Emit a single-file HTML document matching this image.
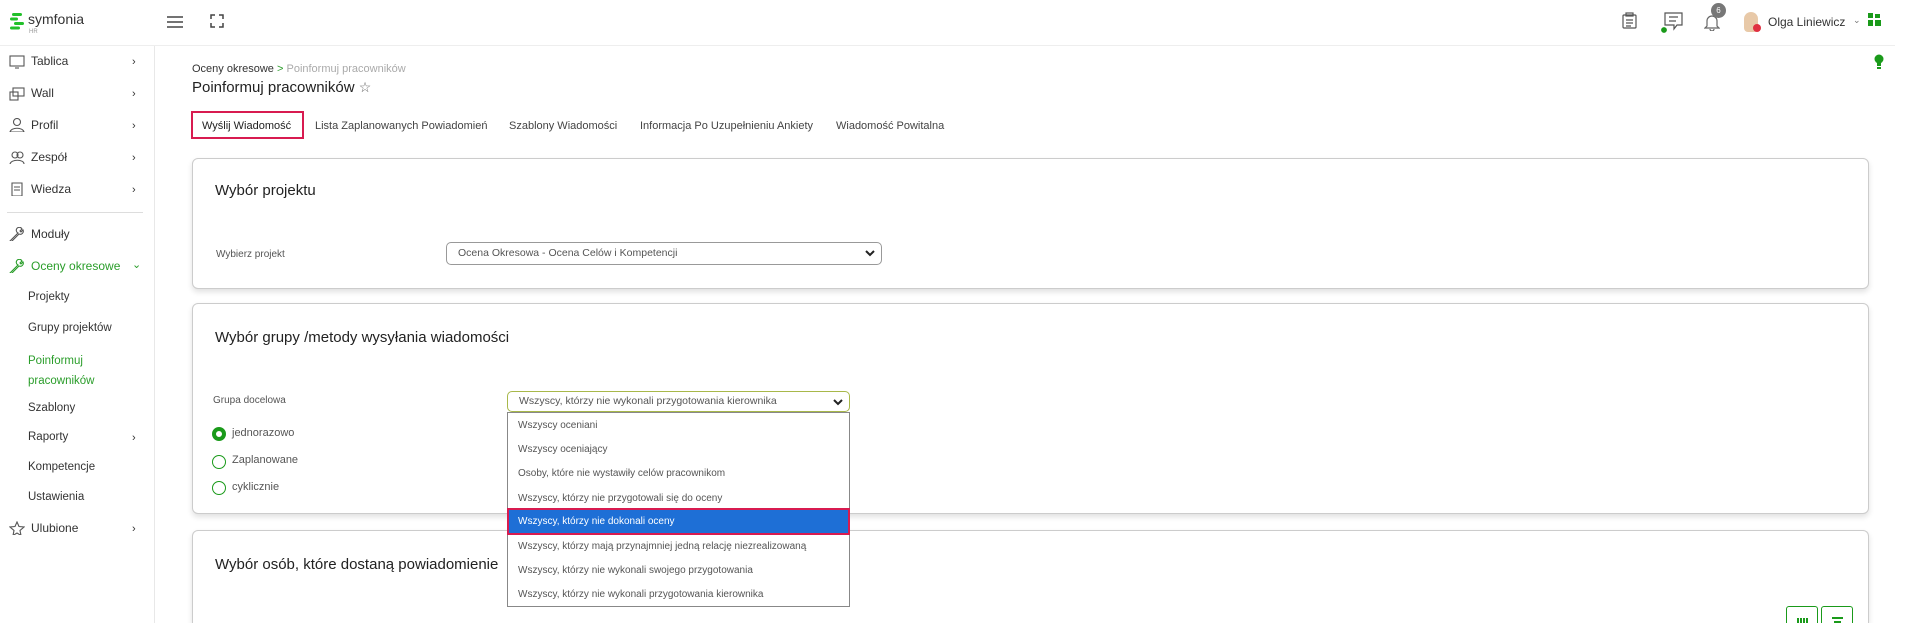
<!DOCTYPE html>
<html style="width:1906px;height:623px;overflow:hidden"><head><meta charset="utf-8"><style>
*{box-sizing:border-box;margin:0;padding:0}
html,body{width:1906px;height:623px;overflow:hidden}
body{background:#fff;font-family:"Liberation Sans",sans-serif;color:#333;position:relative}
.abs{position:absolute}
.hdr{left:0;top:0;width:1895px;height:46px;border-bottom:1px solid #eee;background:#fff}
.side{left:0;top:46px;width:155px;height:577px;border-right:1px solid #e8e8e8;background:#fff}
.si{position:absolute;left:31px;font-size:12px;color:#333}
.sub{position:absolute;left:28px;font-size:11.5px;color:#333}
.chev{position:absolute;left:132px;font-size:11px;color:#333}
.ic{position:absolute;left:9px;width:16px;height:14px}
.card{position:absolute;left:192px;width:1677px;border:1px solid #ccc;border-radius:6px;background:#fff;box-shadow:0 3px 6px rgba(0,0,0,.12)}
.ct{position:absolute;left:22px;font-size:15px;color:#222}
.lbl{position:absolute;font-size:10px;color:#555}
.sel{position:absolute;border:1px solid #999;border-radius:5px;background:#fff;font-size:10.5px;color:#555;padding-left:11px;line-height:20px}
.sel svg{position:absolute;right:6px;top:6px}
.dd{position:absolute;left:507px;top:412px;width:343px;height:195px;border:1px solid #888;background:#fff}
.it{position:absolute;left:10px;font-size:10px;color:#555}
.rad{position:absolute;left:212px;width:14px;height:14px;border:1.5px solid #1a9a1a;border-radius:50%}
.rl{position:absolute;left:232px;font-size:11px;color:#555}
.tab{position:absolute;top:120px;font-size:11px;color:#444}
</style></head><body>
<div class="abs hdr">
 <svg class="abs" style="left:10px;top:13px" width="14" height="17" viewBox="0 0 14 17"><g fill="#22c02a"><rect x="2" y="0" width="10" height="3" rx="1.5"/><rect x="0" y="4.5" width="8" height="3" rx="1.5"/><rect x="4" y="9" width="10" height="3" rx="1.5"/><rect x="0" y="13.5" width="10" height="3" rx="1.5"/></g></svg>
 <div class="abs" style="left:28px;top:11px;font-size:14px;color:#333">symfonia</div>
 <div class="abs" style="left:29px;top:29px;font-size:6px;color:#999">HR</div>
 <svg class="abs" style="left:167px;top:15px" width="16" height="14"><g stroke="#444" stroke-width="1.5"><line x1="0" y1="2" x2="16" y2="2"/><line x1="0" y1="7" x2="16" y2="7"/><line x1="0" y1="12" x2="16" y2="12"/></g></svg>
 <svg class="abs" style="left:210px;top:14px" width="14" height="14" fill="none" stroke="#444" stroke-width="1.5"><path d="M1 5V1h4M9 1h4v4M13 9v4H9M5 13H1V9"/></svg>
 <svg class="abs" style="left:1622px;top:12px" width="15" height="17" fill="none" stroke="#555" stroke-width="1.2"><rect x="1" y="3" width="13" height="13" rx="1"/><rect x="4" y="1" width="7" height="3"/><path d="M4 8h7M4 11h7M4 14h5"/></svg>
 <svg class="abs" style="left:1660px;top:12px" width="24" height="22" fill="none" stroke="#555" stroke-width="1.2"><path d="M5 1h17v12h-5l-3 4v-4H5z"/><path d="M9 5h9M9 9h7"/><circle cx="4" cy="18" r="3.5" fill="#1a9a1a" stroke="#fff"/></svg>
 <svg class="abs" style="left:1704px;top:13px" width="16" height="18" fill="none" stroke="#666" stroke-width="1.2"><path d="M3 13V8a5 5 0 0110 0v5l2 2H1z"/><path d="M6 16a2 2 0 004 0"/></svg>
 <div class="abs" style="left:1711px;top:3px;width:15px;height:15px;border-radius:50%;background:#777;color:#fff;font-size:8px;text-align:center;line-height:15px">6</div>
 <div class="abs" style="left:1744px;top:12px;width:14px;height:20px;border-radius:7px 7px 4px 4px;background:#e8c9a8"></div>
 <div class="abs" style="left:1753px;top:24px;width:8px;height:8px;border-radius:50%;background:#e03040"></div>
 <div class="abs" style="left:1768px;top:15px;font-size:12px;color:#333">Olga Liniewicz</div>
 <div class="abs" style="left:1853px;top:15px;font-size:9px;color:#777">⌄</div>
 <svg class="abs" style="left:1868px;top:13px" width="13" height="13"><g fill="#1a9a1a"><rect x="0" y="0" width="5" height="5"/><rect x="7" y="1" width="5" height="4"/><rect x="0" y="7" width="5" height="6"/><rect x="7" y="7" width="6" height="6"/></g></svg>
</div>
<svg class="abs" style="left:1874px;top:54px" width="10" height="16"><circle cx="5" cy="5" r="4.5" fill="#1a9a1a"/><rect x="3" y="8" width="4" height="4" fill="#1a9a1a"/><rect x="3" y="13" width="4" height="2" fill="#1a9a1a"/></svg>
<div class="abs side">
 <svg class="ic" style="top:9px" fill="none" stroke="#555" stroke-width="1.1"><rect x="1" y="1" width="14" height="10"/><path d="M6 13h4"/></svg><div class="si" style="top:8px">Tablica</div><div class="chev" style="top:10px">›</div>
 <svg class="ic" style="top:41px" fill="none" stroke="#555" stroke-width="1.1"><rect x="4" y="1" width="11" height="8"/><rect x="1" y="5" width="8" height="8"/></svg><div class="si" style="top:40px">Wall</div><div class="chev" style="top:42px">›</div>
 <svg class="ic" style="top:72px" fill="none" stroke="#555" stroke-width="1.1"><circle cx="8" cy="4" r="3.5"/><path d="M1 14c1-5 13-5 14 0z"/></svg><div class="si" style="top:72px">Profil</div><div class="chev" style="top:74px">›</div>
 <svg class="ic" style="top:104px" fill="none" stroke="#555" stroke-width="1.1"><circle cx="6" cy="5" r="3"/><circle cx="11" cy="5" r="3"/><path d="M1 14c1-5 14-5 14 0"/></svg><div class="si" style="top:104px">Zespół</div><div class="chev" style="top:106px">›</div>
 <svg class="ic" style="top:136px" fill="none" stroke="#555" stroke-width="1.1"><path d="M3 1h10v13H3z"/><path d="M5 5h6M5 8h6"/></svg><div class="si" style="top:136px">Wiedza</div><div class="chev" style="top:138px">›</div>
 <div class="abs" style="left:7px;top:166px;width:136px;height:1px;background:#ddd"></div>
 <svg class="ic" style="top:181px" fill="none" stroke="#555" stroke-width="1.1"><path d="M1 14l8-8a3 3 0 114 -4l-2 2 1 1 2-2a3 3 0 01-4 4l-8 8z"/></svg><div class="si" style="top:181px">Moduły</div>
 <svg class="ic" style="top:213px" fill="none" stroke="#2a9d2a" stroke-width="1.1"><path d="M1 14l8-8a3 3 0 114 -4l-2 2 1 1 2-2a3 3 0 01-4 4l-8 8z"/></svg><div class="si" style="top:213px;color:#2a9d2a">Oceny okresowe</div><div class="chev" style="top:212px;color:#2a9d2a">⌄</div>
 <div class="sub" style="top:245px">Projekty</div>
 <div class="sub" style="top:276px">Grupy projektów</div>
 <div class="sub" style="top:305px;color:#2a9d2a;line-height:20px">Poinformuj<br>pracowników</div>
 <div class="sub" style="top:356px">Szablony</div>
 <div class="sub" style="top:385px">Raporty</div><div class="chev" style="top:386px">›</div>
 <div class="sub" style="top:415px">Kompetencje</div>
 <div class="sub" style="top:445px">Ustawienia</div>
 <svg class="ic" style="top:475px" fill="none" stroke="#555" stroke-width="1.1"><path d="M8 1l2 4.5 5 .5-4 3.5 1 5-4-2.5-4 2.5 1-5-4-3.5 5-.5z"/></svg><div class="si" style="top:475px">Ulubione</div><div class="chev" style="top:477px">›</div>
</div>
<div class="abs" style="left:192px;top:63px;font-size:11px;color:#333">Oceny okresowe <span style="color:#2a9d2a">&gt;</span> <span style="color:#aaa">Poinformuj pracowników</span></div>
<div class="abs" style="left:192px;top:79px;font-size:15px;color:#222">Poinformuj pracowników <span style="font-size:14px;color:#666">☆</span></div>
<div class="abs" style="left:191px;top:111px;width:113px;height:28px;border:2.5px solid #d81b50"></div>
<div class="tab" style="left:202px;color:#222">Wyślij Wiadomość</div>
<div class="tab" style="left:315px">Lista Zaplanowanych Powiadomień</div>
<div class="tab" style="left:509px">Szablony Wiadomości</div>
<div class="tab" style="left:640px">Informacja Po Uzupełnieniu Ankiety</div>
<div class="tab" style="left:836px">Wiadomość Powitalna</div>
<div class="card" style="top:158px;height:131px">
 <div class="ct" style="top:23px">Wybór projektu</div>
 <div class="lbl" style="left:23px;top:90px">Wybierz projekt</div>
</div>
<div class="sel" style="left:446px;top:242px;width:436px;height:23px">Ocena Okresowa - Ocena Celów i Kompetencji<svg width="10" height="8"><path d="M1 2l4 4 4-4" stroke="#222" stroke-width="2" fill="none"/></svg></div>
<div class="card" style="top:303px;height:211px">
 <div class="ct" style="top:25px">Wybór grupy /metody wysyłania wiadomości</div>
 <div class="lbl" style="left:20px;top:91px">Grupa docelowa</div>
</div>
<div class="rad" style="top:427px;border-width:4px"></div><div class="rl" style="top:427px">jednorazowo</div>
<div class="rad" style="top:455px"></div><div class="rl" style="top:454px">Zaplanowane</div>
<div class="rad" style="top:481px"></div><div class="rl" style="top:481px">cyklicznie</div>
<div class="card" style="top:530px;height:93px;border-bottom:none;border-radius:6px 6px 0 0">
 <div class="ct" style="top:25px">Wybór osób, które dostaną powiadomienie</div>
</div>
<div class="abs" style="left:1786px;top:606px;width:32px;height:17px;border:1px solid #1a9a1a;border-bottom:none;border-radius:3px 3px 0 0;background:#fff"><div class="abs" style="left:10px;top:11px;width:11px;height:6px;background:repeating-linear-gradient(90deg,#1a9a1a 0 2px,#fff 2px 3px)"></div></div>
<div class="abs" style="left:1821px;top:606px;width:32px;height:17px;border:1px solid #1a9a1a;border-bottom:none;border-radius:3px 3px 0 0;background:#fff"><div class="abs" style="left:10px;top:10px;width:11px;height:2px;background:#1a9a1a"></div><div class="abs" style="left:12px;top:14px;width:7px;height:3px;background:#1a9a1a"></div></div>
<div class="sel" style="left:507px;top:391px;width:343px;height:21px;border-color:#a8b84a;line-height:19px">Wszyscy, którzy nie wykonali przygotowania kierownika<svg width="10" height="8"><path d="M1 2l4 4 4-4" stroke="#222" stroke-width="2" fill="none"/></svg></div>
<div class="dd">
 <div class="it" style="top:7px">Wszyscy oceniani</div>
 <div class="it" style="top:31px">Wszyscy oceniający</div>
 <div class="it" style="top:55px">Osoby, które nie wystawiły celów pracownikom</div>
 <div class="it" style="top:80px">Wszyscy, którzy nie przygotowali się do oceny</div>
 <div class="abs" style="left:-1px;top:95px;width:343px;height:27px;background:#1e6fd6;border:2.5px solid #d81b50"></div>
 <div class="it" style="top:103px;color:#fff">Wszyscy, którzy nie dokonali oceny</div>
 <div class="it" style="top:128px">Wszyscy, którzy mają przynajmniej jedną relację niezrealizowaną</div>
 <div class="it" style="top:152px">Wszyscy, którzy nie wykonali swojego przygotowania</div>
 <div class="it" style="top:176px">Wszyscy, którzy nie wykonali przygotowania kierownika</div>
</div>
</body></html>
